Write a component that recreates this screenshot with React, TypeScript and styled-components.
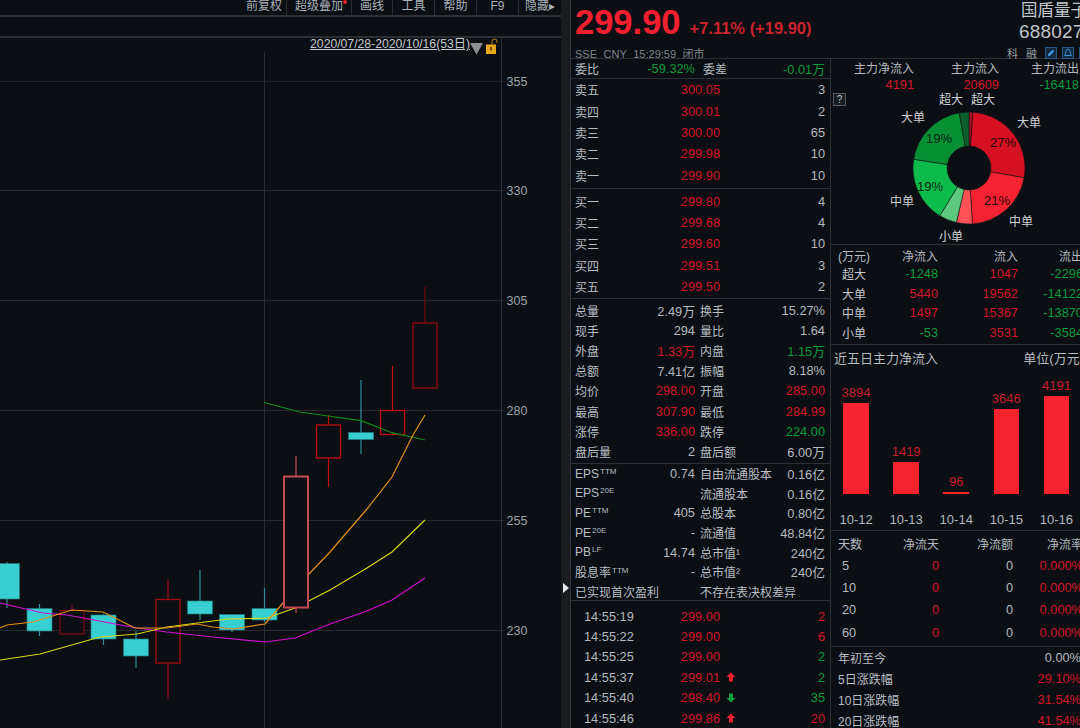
import React from 'react';
import styled, { createGlobalStyle } from 'styled-components';

const FONT = `"Liberation Sans", "Noto Sans CJK SC", sans-serif`;
const BG = '#0b0e13';
const LINE = '#2b2e33';
const TXT = '#b4b9bf';
const RED = '#d2162a';
const GREEN = '#0b9a3c';

const Global = createGlobalStyle`
  html, body { margin: 0; padding: 0; background: ${BG}; overflow: hidden; }
  * { box-sizing: border-box; }
  #root { width: 1080px; height: 728px; overflow: hidden; }
`;

const Page = styled.div`
  width: 1080px; height: 728px; display: flex; background: ${BG};
  font-family: ${FONT}; color: ${TXT}; font-size: 12.8px; overflow: hidden;
`;

/* ---- left: chart ---- */
const ChartPane = styled.div`
  width: 561px; flex: none; display: flex; flex-direction: column;
`;
const Toolbar = styled.div`
  height: 17px; flex: none; display: flex; justify-content: flex-end; border-bottom: 2px solid ${LINE};
`;
const ToolItem = styled.div<{ $w: number }>`
  width: ${p => p.$w}px; height: 15px; line-height: 13px; text-align: center; font-size: 12px; color: #aab0b6;
  border-left: 1px solid ${LINE}; position: relative; white-space: nowrap; overflow: hidden;
  &:first-child { border-left: none; }
`;
const RedDot = styled.span`
  position: absolute; right: 4px; top: 0; width: 4px; height: 4px; border-radius: 50%; background: #f01c2e;
`;
const SubBar = styled.div`
  height: 21px; flex: none; border-bottom: 2px solid ${LINE};
`;
const ChartArea = styled.div`
  position: relative; flex: 1; min-height: 0;
`;
const RangeBar = styled.div`
  position: absolute; right: 61px; top: 0; display: flex; align-items: flex-start; gap: 0;
`;
const RangeText = styled.span`
  font-size: 12.2px; line-height: 13px; color: #c4c8cc; text-decoration: underline; white-space: nowrap;
`;
const Splitter = styled.div`
  width: 10px; flex: none; position: relative; background: #1a1c20; border-right: 1px solid #33363b;
`;
const SplitArrow = styled.span`
  position: absolute; left: 2px; top: 583px; width: 0; height: 0;
  border-left: 6px solid #e6e8ea; border-top: 5px solid transparent; border-bottom: 5px solid transparent;
`;

const up = (x: number, y1: number, y2: number, w1: number, w2: number, c: string, sw = 1.3) => ({ x, y1, y2, w1, w2, c, sw, hollow: true });
const dn = (x: number, y1: number, y2: number, w1: number, w2: number) => ({ x, y1, y2, w1, w2, c: '#38cfd0', sw: 1, hollow: false });
type K = ReturnType<typeof up>;
const candles: K[] = [
  dn(7, 563.5, 599, 562, 608),
  dn(39.5, 608.5, 631, 604, 636),
  up(72, 610.5, 634, 604, 634, '#7a0a12'),
  dn(103.5, 615, 639, 614, 645),
  dn(136, 639, 656, 631, 668),
  up(168, 599.5, 663, 580, 699, '#a50b12'),
  dn(200, 601, 614, 570, 620),
  dn(232, 614.5, 630, 614, 632),
  dn(264.5, 608.5, 620, 588, 622),
  up(328.5, 425, 458, 415, 487, '#c00c14'),
  dn(361, 432.5, 439.5, 380, 454),
  up(392.5, 410.5, 434.5, 366, 434.5, '#c00c14'),
  up(425, 323, 388, 287, 388, '#7a0a12', 1.6),
];
const bigCandle = up(296, 476.5, 607.5, 456, 613, '#c44a50', 2);
const OFFY = 38;
const pts = (a: number[][]) => a.map(([x, y]) => `${x},${y}`).join(' ');
const green = [[264, 402.5], [300, 412], [328, 416], [361, 420.7], [392, 432.7], [425, 440]];
const orange = [[0, 628], [7, 625], [33, 622], [72, 610], [103, 612], [135, 628], [167, 628], [197, 624], [213, 627], [233, 629], [265, 624], [283, 603], [308, 575], [330, 552], [367, 509], [392, 477], [413, 435], [425, 415]];
const yellow = [[0, 660], [40, 654], [100, 637], [137, 634], [167, 627], [228, 619], [267, 618], [295, 608], [330, 590], [367, 568], [392, 552], [425, 520]];
const magenta = [[0, 603], [43, 613], [67, 615], [137, 628], [167, 632], [213, 637], [265, 642], [295, 638], [330, 624], [367, 611], [392, 600], [425, 578]];
const ticks = [[355, 81], [330, 190], [305, 300], [280, 410], [255, 520], [230, 630]];

const Candle = ({ k }: { k: K }) => (
  <g>
    <line x1={k.x} x2={k.x} y1={k.w1} y2={k.w2} stroke={k.hollow ? k.c : '#2f8f96'} strokeWidth="1.2" />
    {k.hollow
      ? <rect x={k.x - 12} y={k.y1} width={24} height={k.y2 - k.y1} fill={BG} stroke={k.c} strokeWidth={k.sw} />
      : <rect x={k.x - 12.5} y={k.y1} width={25} height={k.y2 - k.y1} fill={k.c} stroke="#24797f" strokeWidth="0.7" />}
  </g>
);

const Chart = () => (
  <svg width="561" height="690" viewBox={`0 ${OFFY} 561 690`} style={{ display: 'block' }}>
    {ticks.map(([, y], i) => <line key={y} x1="0" x2="505" y1={y + 0.5} y2={y + 0.5} stroke={i === 0 ? '#1d2024' : '#25282c'} strokeWidth="1" />)}
    <line x1="501.5" x2="501.5" y1="38" y2="728" stroke="#2b2e33" />
    <line x1="264.5" x2="264.5" y1="52" y2="728" stroke="#2b2e33" />
    {ticks.map(([v, y]) => (
      <text key={v} x="506.5" y={y + 4.5} fill="#9ea3a9" fontSize="12.5" fontFamily={FONT}>{v}</text>
    ))}
    {candles.map((k, i) => <Candle key={i} k={k} />)}
    <polyline points={pts(green)} fill="none" stroke="#0d8a1c" strokeWidth="1.2" />
    <polyline points={pts(magenta)} fill="none" stroke="#d30dd0" strokeWidth="1.2" />
    <polyline points={pts(yellow)} fill="none" stroke="#d8d812" strokeWidth="1.2" />
    <polyline points={pts(orange)} fill="none" stroke="#e0901a" strokeWidth="1.2" />
    <Candle k={bigCandle} />
  </svg>
);

/* ---- right: quote ---- */
const Quote = styled.div`
  flex: 1; min-width: 0; display: flex; flex-direction: column; overflow: hidden;
`;
const Header = styled.div`
  height: 59px; flex: none; position: relative; border-bottom: 1px solid ${LINE};
  padding-left: 4px; white-space: nowrap;
`;
const PriceRow = styled.div`
  display: flex; align-items: baseline; gap: 9px; height: 44px; line-height: 44px;
`;
const BigPrice = styled.span`
  font-size: 34.5px; font-weight: 700; color: #f4202f;
`;
const Change = styled.span`
  font-size: 16.5px; font-weight: 700; color: #c8232f;
`;
const Market = styled.div`
  font-size: 11px; color: #7f8489; display: flex; gap: 6.5px; line-height: 13px; margin-top: 4px;
`;
const NameBlock = styled.div`
  position: absolute; left: 450px; top: 0; width: 100px; color: #c2c6ca;
`;
const StockName = styled.div`
  font-size: 16.5px; line-height: 21px;
`;
const StockCode = styled.div`
  font-size: 19px; line-height: 22px; margin-left: -2px; letter-spacing: 0.2px;
`;
const Badges = styled.div`
  position: absolute; left: 436px; top: 45px; display: flex; align-items: center; gap: 5px; font-size: 11px;
  color: #9a9ea3; white-space: nowrap;
`;
const Badge = styled.span`
  margin-right: 3px;
`;
const IconBox = styled.span`
  width: 12px; height: 12px; background: #14283e; border: 1px solid #2a5580; display: inline-flex;
  align-items: center; justify-content: center;
`;
const Columns = styled.div`
  flex: 1; min-height: 0; display: flex;
`;
const LeftCol = styled.div`
  width: 260px; flex: none; display: flex; flex-direction: column; border-right: 1px solid ${LINE};
`;
const RightCol = styled.div`
  flex: 1; min-width: 0; display: flex; flex-direction: column; overflow: hidden;
`;
const Block = styled.div<{ $h: number; $pt?: number }>`
  height: ${p => p.$h}px; flex: none; border-bottom: 1px solid ${LINE}; padding-top: ${p => p.$pt ?? 0}px;
`;
const OpenBlock = styled(Block)`
  border-bottom: none;
`;
const Row = styled.div<{ $h?: number }>`
  display: flex; align-items: center; height: ${p => p.$h ?? 20}px; padding: 0 5px 0 4px; white-space: nowrap; position: relative;
`;
const Cell = styled.span<{ $w?: number; $c?: string; $right?: boolean; $grow?: boolean; $ml?: number; $pl?: number }>`
  ${p => (p.$w ? `width: ${p.$w}px; flex: none;` : '')}
  ${p => (p.$grow ? 'flex: 1;' : '')}
  ${p => (p.$right ? 'text-align: right;' : '')}
  ${p => (p.$ml ? `margin-left: ${p.$ml}px;` : '')}
  ${p => (p.$pl ? `padding-left: ${p.$pl}px;` : '')}
  color: ${p => p.$c ?? TXT};
`;
const Label = styled(Cell)`
  font-size: 12px; color: ${p => p.$c ?? '#b9bec3'};
`;
const Sup = styled.sup`
  font-size: 8px; line-height: 0; vertical-align: 4px; margin-left: 1px;
`;
const TradeArrow = styled.svg`
  position: absolute; left: 155px; top: 5px;
`;

const asks = [['卖五', '300.05', '3'], ['卖四', '300.01', '2'], ['卖三', '300.00', '65'], ['卖二', '299.98', '10'], ['卖一', '299.90', '10']];
const bids = [['买一', '299.80', '4'], ['买二', '299.68', '4'], ['买三', '299.60', '10'], ['买四', '299.51', '3'], ['买五', '299.50', '2']];
const stats: [string, string, string, string, string, string][] = [
  ['总量', '2.49万', TXT, '换手', '15.27%', TXT],
  ['现手', '294', TXT, '量比', '1.64', TXT],
  ['外盘', '1.33万', RED, '内盘', '1.15万', GREEN],
  ['总额', '7.41亿', TXT, '振幅', '8.18%', TXT],
  ['均价', '298.00', RED, '开盘', '285.00', RED],
  ['最高', '307.90', RED, '最低', '284.99', RED],
  ['涨停', '336.00', RED, '跌停', '224.00', GREEN],
  ['盘后量', '2', TXT, '盘后额', '6.00万', TXT],
];
const fund: [string, string, string, string, string][] = [
  ['EPS', 'TTM', '0.74', '自由流通股本', '0.16亿'],
  ['EPS', '20E', '', '流通股本', '0.16亿'],
  ['PE', 'TTM', '405', '总股本', '0.80亿'],
  ['PE', '20E', '-', '流通值', '48.84亿'],
  ['PB', 'LF', '14.74', '总市值¹', '240亿'],
  ['股息率', 'TTM', '-', '总市值²', '240亿'],
];
const trades: [string, string, string, string, '' | 'u' | 'd'][] = [
  ['14:55:19', '299.00', '2', RED, ''],
  ['14:55:22', '299.00', '6', RED, ''],
  ['14:55:25', '299.00', '2', GREEN, ''],
  ['14:55:37', '299.01', '2', GREEN, 'u'],
  ['14:55:40', '298.40', '35', GREEN, 'd'],
  ['14:55:46', '299.86', '20', RED, 'u'],
];

/* donut */
const polar = (r: number, deg: number, cx = 56, cy = 56) => {
  const a = ((deg - 90) * Math.PI) / 180;
  return [cx + r * Math.cos(a), cy + r * Math.sin(a)];
};
const slice = (from: number, to: number, R = 56, r = 22) => {
  const [a, b] = polar(R, from);
  const [c, d] = polar(R, to);
  const [e, f] = polar(r, to);
  const [g, h] = polar(r, from);
  const big = to - from > 180 ? 1 : 0;
  return `M${a} ${b}A${R} ${R} 0 ${big} 1 ${c} ${d}L${e} ${f}A${r} ${r} 0 ${big} 0 ${g} ${h}Z`;
};
const slices: [number, number, string][] = [
  [0, 4, '#a81020'],
  [4, 100, '#d41022'],
  [100, 176.5, '#f52231'],
  [176.5, 193, '#ff5256'],
  [193, 211.5, '#5cc97f'],
  [211.5, 279, '#0cbb4c'],
  [279, 350, '#078f34'],
  [350, 360, '#0a5f2a'],
];

const DonutBox = styled.div`
  height: 186px; flex: none; position: relative; border-bottom: 1px solid ${LINE};
`;
const Tag = styled.span<{ $x: number; $y: number; $c?: string; $size?: number }>`
  position: absolute; left: ${p => p.$x}px; top: ${p => p.$y}px; white-space: nowrap;
  color: ${p => p.$c ?? '#d0d3d6'}; font-size: ${p => p.$size ?? 12}px; line-height: 14px;
`;
const DonutSvg = styled.svg`
  position: absolute; left: 82px; top: 53px;
`;
const Question = styled.span`
  position: absolute; left: 2px; top: 34px; width: 13px; height: 13px; border: 1px solid #55595e; background: #1a1d21;
  font-size: 10px; line-height: 11px; text-align: center; color: #c0c4c8;
`;
const FlowHead = styled.div<{ $h: number; $pt?: number }>`
  display: grid; grid-template-columns: 83px 85px 80px; height: ${p => p.$h}px; line-height: 15px; padding-top: ${p => p.$pt ?? 0}px; white-space: nowrap; text-align: right;
`;
const FlowCell = styled.span<{ $c?: string }>`
  color: ${p => p.$c ?? TXT};
`;
const FlowLabel = styled(FlowCell)`
  font-size: 12px;
`;
const FlowRow = styled.div<{ $h?: number; $cols: string }>`
  display: grid; grid-template-columns: ${p => p.$cols}; height: ${p => p.$h ?? 20}px; align-items: center; padding-left: 7px; white-space: nowrap;
`;
const Right = styled.span<{ $c?: string }>`
  text-align: right; color: ${p => p.$c ?? TXT};
`;
const RightLabel = styled(Right)`
  font-size: 12px;
`;
const FiveHead = styled.div`
  display: flex; justify-content: space-between; height: 25px; align-items: center; padding: 0 0 0 3px; white-space: nowrap; width: 253px; font-size: 13px;
`;
const Bars = styled.div`
  height: 156px; display: flex;
`;
const BarCol = styled.div`
  width: 50.1px; flex: none; display: flex; flex-direction: column; align-items: center; justify-content: flex-end;
`;
const BarVal = styled.span`
  color: #c41f2e; font-size: 13px; line-height: 15px; margin-bottom: 3px;
`;
const Bar = styled.div<{ $h: number }>`
  width: 25.5px; height: ${p => p.$h}px; background: #f5222f;
`;
const BarDate = styled.span`
  height: 32px; padding-top: 18px; line-height: 15px; font-size: 13px; color: #b4b9bf;
`;
const StatBlock = styled.div`
  flex: 1;
`;
const Line = styled.div`
  height: 21px; display: flex; align-items: center; justify-content: space-between; padding: 0 0 0 7px; width: 250px; white-space: nowrap;
`;

const fiveBars = [['3894', 91, '10-12'], ['1419', 32, '10-13'], ['96', 2, '10-14'], ['3646', 85, '10-15'], ['4191', 98, '10-16']] as const;
const FLOW_COLS = '50px 50px 80px 65px';
const DAY_COLS = '50px 51px 74px 70px';

export default function App() {
  return (
    <Page>
      <Global />
      <ChartPane>
        <Toolbar>
          <ToolItem $w={44}>前复权</ToolItem>
          <ToolItem $w={65}>超级叠加<RedDot /></ToolItem>
          <ToolItem $w={41}>画线</ToolItem>
          <ToolItem $w={42}>工具</ToolItem>
          <ToolItem $w={42}>帮助</ToolItem>
          <ToolItem $w={42}>F9</ToolItem>
          <ToolItem $w={43}>隐藏▸</ToolItem>
        </Toolbar>
        <SubBar />
        <ChartArea>
          <Chart />
          <RangeBar>
            <RangeText>2020/07/28-2020/10/16(53日)</RangeText>
            <svg width="30" height="17" viewBox="0 0 30 17">
              <path d="M0 5H13L6.5 16.5Z" fill="#8d8f91" />
              <rect x="16" y="6.5" width="10" height="9.5" fill="#e8a51d" />
              <path d="M22 6.5V3.5A2.4 2.4 0 0 1 27 3.5V5" fill="none" stroke="#c98f1c" strokeWidth="0.9" />
              <rect x="20.4" y="9" width="1.3" height="3.5" fill="#3a2a05" />
            </svg>
          </RangeBar>
        </ChartArea>
      </ChartPane>
      <Splitter><SplitArrow /></Splitter>
      <Quote>
        <Header>
          <PriceRow>
            <BigPrice>299.90</BigPrice>
            <Change>+7.11% (+19.90)</Change>
          </PriceRow>
          <Market><span>SSE</span><span>CNY</span><span>15:29:59</span><span>闭市</span></Market>
          <NameBlock>
            <StockName>国盾量子</StockName>
            <StockCode>688027</StockCode>
          </NameBlock>
          <Badges>
            <Badge>科</Badge><Badge>融</Badge>
            <IconBox>
              <svg width="10" height="10" viewBox="0 0 9 9"><path d="M1.5 7.5L2 5.4L6 1.5L7.5 3L3.6 7Z" fill="#3d9be8" /></svg>
            </IconBox>
            <IconBox>
              <svg width="10" height="10" viewBox="0 0 9 9"><path d="M4.5 1C6 1 6.5 2.5 6.5 4C6.5 5.5 7.5 6 7.5 6.8H1.5C1.5 6 2.5 5.5 2.5 4C2.5 2.5 3 1 4.5 1Z" fill="none" stroke="#3d9be8" strokeWidth="0.9" /></svg>
            </IconBox>
            <IconBox>
              <svg width="10" height="10" viewBox="0 0 9 9"><path d="M4.5 1V8M1 4.5H8" stroke="#3d9be8" strokeWidth="1.4" /></svg>
            </IconBox>
          </Badges>
        </Header>
        <Columns>
          <LeftCol>
            <Block $h={20}>
              <Row $h={19}>
                <Label $w={52}>委比</Label>
                <Cell $w={68} $right $c={GREEN}>-59.32%</Cell>
                <Label $ml={8}>委差</Label>
                <Cell $grow $right $c={GREEN}>-0.01万</Cell>
              </Row>
            </Block>
            <Block $h={110}>
              {asks.map(([n, p, v]) => (
                <Row key={n} $h={21.4}>
                  <Label $w={105}>{n}</Label><Cell $w={40} $right $c={RED}>{p}</Cell><Cell $grow $right>{v}</Cell>
                </Row>
              ))}
            </Block>
            <Block $h={110} $pt={2}>
              {bids.map(([n, p, v]) => (
                <Row key={n} $h={21.2}>
                  <Label $w={105}>{n}</Label><Cell $w={40} $right $c={RED}>{p}</Cell><Cell $grow $right>{v}</Cell>
                </Row>
              ))}
            </Block>
            <Block $h={165} $pt={1}>
              {stats.map(([a, b, c, d, e, f]) => (
                <Row key={a} $h={20.2}>
                  <Label $w={50}>{a}</Label><Cell $w={70} $right $c={c}>{b}</Cell>
                  <Label $ml={5}>{d}</Label><Cell $grow $right $c={f}>{e}</Cell>
                </Row>
              ))}
            </Block>
            <Block $h={137}>
              {fund.map(([a, s, b, l, v]) => (
                <Row key={a + s} $h={19.6}>
                  <Label $w={80}>{a}<Sup>{s}</Sup></Label><Cell $w={40} $right>{b}</Cell>
                  <Label $ml={5}>{l}</Label><Cell $grow $right>{v}</Cell>
                </Row>
              ))}
              <Row $h={19.6}>
                <Label $w={125}>已实现首次盈利</Label><Label>不存在表决权差异</Label>
              </Row>
            </Block>
            <OpenBlock $h={126} $pt={5}>
              {trades.map(([t, p, v, c, dir]) => (
                <Row key={t} $h={20.4}>
                  <Cell $w={105} $pl={9}>{t}</Cell>
                  <Cell $w={40} $right $c={RED}>{p}</Cell>
                  {dir && (
                    <TradeArrow width="10" height="10" viewBox="0 0 10 10">
                      {dir === 'u'
                        ? <path d="M5 0.5L9.5 5H7V9.5H3V5H0.5Z" fill="#f02030" />
                        : <path d="M5 9.5L9.5 5H7V0.5H3V5H0.5Z" fill="#0fa040" />}
                    </TradeArrow>
                  )}
                  <Cell $grow $right $c={c}>{v}</Cell>
                </Row>
              ))}
            </OpenBlock>
          </LeftCol>
          <RightCol>
            <DonutBox>
              <FlowHead $h={18} $pt={3}>
                <FlowLabel>主力净流入</FlowLabel><FlowLabel>主力流入</FlowLabel><FlowLabel>主力流出</FlowLabel>
              </FlowHead>
              <FlowHead $h={15}>
                <FlowCell $c={RED}>4191</FlowCell><FlowCell $c={RED}>20609</FlowCell><FlowCell $c={GREEN}>-16418</FlowCell>
              </FlowHead>
              <Question>?</Question>
              <Tag $x={108} $y={34}>超大</Tag>
              <Tag $x={140} $y={34}>超大</Tag>
              <Tag $x={70} $y={52}>大单</Tag>
              <Tag $x={186} $y={57}>大单</Tag>
              <Tag $x={59} $y={136}>中单</Tag>
              <Tag $x={178} $y={156}>中单</Tag>
              <Tag $x={108} $y={171}>小单</Tag>
              <DonutSvg width="112" height="112" viewBox="0 0 112 112">
                {slices.map(([a, b, c]) => <path key={a} d={slice(a, b)} fill={c} stroke="#12141a" strokeWidth="0.6" />)}
              </DonutSvg>
              <Tag $x={159} $y={77} $c="#2a0508" $size={13}>27%</Tag>
              <Tag $x={153} $y={135} $c="#2a0508" $size={13}>21%</Tag>
              <Tag $x={86} $y={121} $c="#03240e" $size={13}>19%</Tag>
              <Tag $x={95} $y={73} $c="#03240e" $size={13}>19%</Tag>
            </DonutBox>
            <Block $h={100} $pt={2}>
              <FlowRow $h={17} $cols={FLOW_COLS}>
                <Label>(万元)</Label><RightLabel>净流入</RightLabel><RightLabel>流入</RightLabel><RightLabel>流出</RightLabel>
              </FlowRow>
              {[['超大', '-1248', '1047', '-2296', GREEN], ['大单', '5440', '19562', '-14122', RED], ['中单', '1497', '15367', '-13870', RED], ['小单', '-53', '3531', '-3584', GREEN]].map(([a, b, c, d, col]) => (
                <FlowRow key={a} $h={19.5} $cols={FLOW_COLS}>
                  <Label $c="#c4c8cc" $pl={4}>{a}</Label>
                  <Right $c={col}>{b}</Right>
                  <Right $c={RED}>{c}</Right>
                  <Right $c={GREEN}>{d}</Right>
                </FlowRow>
              ))}
            </Block>
            <Block $h={186}>
              <FiveHead><span>近五日主力净流入</span><span>单位(万元)</span></FiveHead>
              <Bars>
                {fiveBars.map(([v, h, d]) => (
                  <BarCol key={d}>
                    <BarVal>{v}</BarVal>
                    <Bar $h={h} />
                    <BarDate>{d}</BarDate>
                  </BarCol>
                ))}
              </Bars>
            </Block>
            <Block $h={116} $pt={2}>
              <FlowRow $h={21} $cols={DAY_COLS}>
                <Label>天数</Label><RightLabel>净流天</RightLabel><RightLabel>净流额</RightLabel><RightLabel>净流率</RightLabel>
              </FlowRow>
              {['5', '10', '20', '60'].map(n => (
                <FlowRow key={n} $h={22.3} $cols={DAY_COLS}>
                  <Cell $pl={4}>{n}</Cell>
                  <Right $c={RED}>0</Right><Right>0</Right><Right $c={RED}>0.000%</Right>
                </FlowRow>
              ))}
            </Block>
            <StatBlock>
              {[['年初至今', '0.00%', TXT], ['5日涨跌幅', '29.10%', RED], ['10日涨跌幅', '31.54%', RED], ['20日涨跌幅', '41.54%', RED]].map(([a, b, c]) => (
                <Line key={a}><Label>{a}</Label><Right $c={c}>{b}</Right></Line>
              ))}
            </StatBlock>
          </RightCol>
        </Columns>
      </Quote>
    </Page>
  );
}
